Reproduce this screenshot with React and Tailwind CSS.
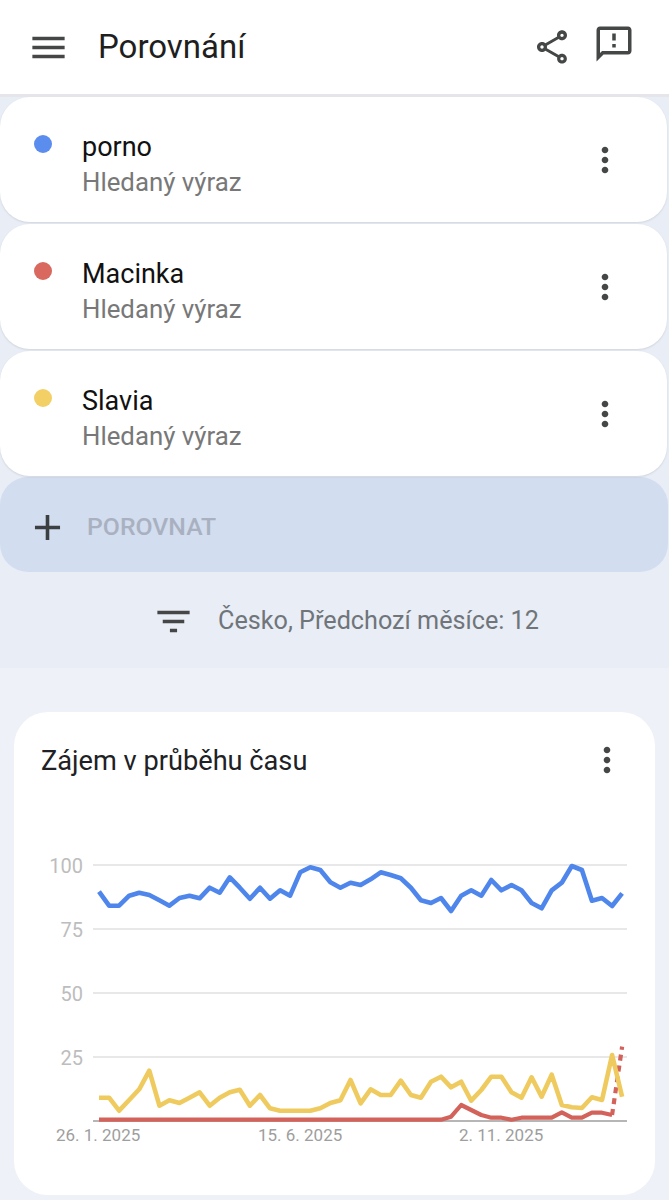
const blue = [155,197,197,167,158,165,181,197,174,167,175,143,158,112,143,176,143,176,151,167,97,82,90,127,143,128,135,118,97,105,115,143,181,189,174,213,167,151,167,120,151,135,151,189,205,151,128,78,90,182,174,198,160];
const yellow = [773,773,812,780,748,692,797,781,789,773,757,797,773,757,749,797,765,805,812,812,812,812,805,789,781,720,790,748,765,765,722,765,773,725,710,742,725,782,750,710,710,757,773,712,770,704,795,802,804,772,780,645,770];
const red = [...Array(35).fill(839),830,795,810,825,833,833,839,833,833,833,833,817,833,833,818,818,825];
const px = (i) => 99 + i * 10.06;
const py = (v) => v / 3 + 840;
const pts = (arr) => arr.map((v, i) => `${px(i).toFixed(1)},${py(v).toFixed(1)}`).join(" ");

const Menu = () => (
  <svg width="43" height="43" viewBox="0 0 24 24" fill="#444746"><path d="M3 18h18v-2H3v2zm0-5h18v-2H3v2zm0-7v2h18V6H3z" /></svg>
);
const More = () => (
  <svg width="40" height="40" viewBox="0 0 24 24" fill="#444746"><path d="M12 8c1.1 0 2-.9 2-2s-.9-2-2-2-2 .9-2 2 .9 2 2 2zm0 2c-1.1 0-2 .9-2 2s.9 2 2 2 2-.9 2-2-.9-2-2-2zm0 6c-1.1 0-2 .9-2 2s.9 2 2 2 2-.9 2-2-.9-2-2-2z" /></svg>
);

const Term = ({ name, dot }) => (
  <div className="flex h-[125px] w-[667px] rounded-[30px] bg-white shadow-[0_1px_2px_rgba(120,120,120,0.2)]">
    <div className={`ml-[34px] mt-[38px] h-[18px] w-[18px] rounded-full ${dot}`} />
    <div className="ml-[30px] mt-[33px] flex-1">
      <div className="text-[27px] leading-[34px] text-[#111111]">{name}</div>
      <div className="mt-[1px] text-[25.8px] leading-[34px] text-[#787878]">Hledaný výraz</div>
    </div>
    <div className="mr-[42px] mt-[43px]"><More /></div>
  </div>
);

export default function App() {
  return (
    <div className="h-[1200px] w-[669px] overflow-hidden bg-[#eef1f8] font-['Roboto',sans-serif]">
      <header className="flex h-[97px] items-center border-b-[3px] border-[#e4e6ea] bg-white">
        <div className="ml-[27px]"><Menu /></div>
        <h1 className="ml-[28px] flex-1 text-[33px] font-normal leading-[40px] text-[#1f1f1f]">Porovnání</h1>
        <svg className="mr-[21px]" width="40" height="40" viewBox="0 0 24 24" fill="#444746"><path d="M18 16.08c-.76 0-1.44.3-1.96.77L8.91 12.7c.05-.23.09-.46.09-.7s-.04-.47-.09-.7l7.05-4.11c.54.5 1.25.81 2.04.81 1.66 0 3-1.34 3-3s-1.34-3-3-3-3 1.34-3 3c0 .24.04.47.09.7L8.04 9.81C7.5 9.31 6.79 9 6 9c-1.66 0-3 1.34-3 3s1.34 3 3 3c.79 0 1.5-.31 2.04-.81l7.12 4.16c-.05.21-.08.43-.08.65 0 1.61 1.31 2.92 2.92 2.92s2.92-1.31 2.92-2.92-1.31-2.92-2.92-2.92zM18 4c.55 0 1 .45 1 1s-.45 1-1 1-1-.45-1-1 .45-1 1-1zM6 13c-.55 0-1-.45-1-1s.45-1 1-1 1 .45 1 1-.45 1-1 1zm12 7.02c-.55 0-1-.45-1-1s.45-1 1-1 1 .45 1 1-.45 1-1 1z" /></svg>
        <svg className="mb-[6px] mr-[34px]" width="42" height="42" viewBox="0 0 24 24" fill="#444746"><path d="M20 2H4c-1.1 0-1.99.9-1.99 2L2 22l4-4h14c1.1 0 2-.9 2-2V4c0-1.1-.9-2-2-2zm0 14H5.17L4 17.17V4h16v12zm-9-4h2v2h-2zm0-6h2v4h-2z" /></svg>
      </header>

      <section className="bg-[#e8edf6]">
        <div className="flex flex-col gap-[2px]">
          <Term name="porno" dot="bg-[#5b8def]" />
          <Term name="Macinka" dot="bg-[#d9695f]" />
          <Term name="Slavia" dot="bg-[#f2d066]" />
        </div>
        <div className="mt-[1px] flex h-[95px] w-[668px] items-center rounded-[28px] bg-[#d2ddef]">
          <svg className="ml-[26px] mt-[6px]" width="43" height="43" viewBox="0 0 24 24" fill="#3c4043"><path d="M19 13h-6v6h-2v-6H5v-2h6V5h2v6h6v2z" /></svg>
          <span className="ml-[18px] mt-[5px] text-[24.8px] font-medium text-[#a9b1c0]">POROVNAT</span>
        </div>
        <div className="flex h-[96px] items-center">
          <svg className="ml-[152px] mt-[2px]" width="43" height="43" viewBox="0 0 24 24" fill="#444746"><path d="M10 18h4v-2h-4v2zM3 6v2h18V6H3zm3 7h12v-2H6v2z" /></svg>
          <span className="ml-[23px] mt-[2px] text-[25.2px] text-[#70757a]">Česko, Předchozí měsíce: 12</span>
        </div>
      </section>

      <section className="mx-[14px] mt-[44px] h-[483px] w-[641px] rounded-[34px] bg-white">
        <div className="flex h-[128px] items-start pt-[32px]">
          <h2 className="ml-[27px] flex-1 text-[27.2px] font-normal leading-[34px] text-[#202124]">Zájem v průběhu času</h2>
          <div className="mr-[28px] mt-[-4px]"><More /></div>
        </div>
        <svg width="641" height="315" viewBox="14 840 641 315" className="block">
          {[865, 929, 993, 1057].map((y) => (
            <line key={y} x1="93" x2="627" y1={y} y2={y} stroke="#e0e0e0" strokeWidth="1.6" />
          ))}
          <line x1="93" x2="627" y1="1121" y2="1121" stroke="#9e9e9e" strokeWidth="1.5" />
          {[["100", 873], ["75", 937], ["50", 1001], ["25", 1065]].map(([t, y]) => (
            <text key={t} x="83" y={y} textAnchor="end" fontSize="20" fill="#bdbdbd" fontFamily="Roboto, sans-serif">{t}</text>
          ))}
          {[["26. 1. 2025", 56], ["15. 6. 2025", 258], ["2. 11. 2025", 459]].map(([t, x]) => (
            <text key={t} x={x} y="1141" fontSize="17" fill="#9e9e9e" fontFamily="Roboto, sans-serif">{t}</text>
          ))}
          <polyline points={pts(blue)} fill="none" stroke="#4f86ec" strokeWidth="4.6" strokeLinejoin="round" />
          <polyline points={pts(red)} fill="none" stroke="#d3625a" strokeWidth="4.2" strokeLinejoin="round" />
          <line x1={px(51)} y1={py(825)} x2={px(52)} y2={py(620)} stroke="#d3625a" strokeWidth="4.2" strokeDasharray="6 5" />
          <polyline points={pts(yellow)} fill="none" stroke="#efcb5f" strokeWidth="4.6" strokeLinejoin="round" />
        </svg>
      </section>
    </div>
  );
}
